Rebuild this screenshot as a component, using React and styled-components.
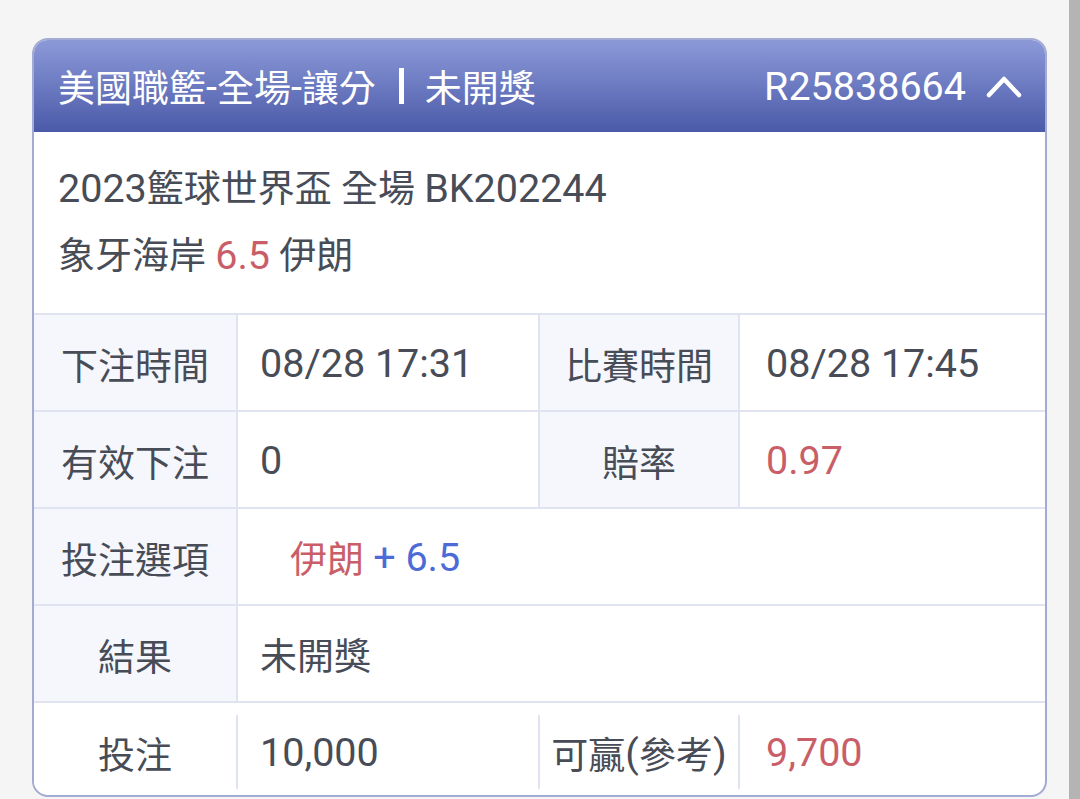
import styled, { createGlobalStyle } from 'styled-components'

const GlobalStyle = createGlobalStyle`
    html, body {
        margin: 0;
        padding: 0;
        background: #f5f5f5;
        overflow: hidden;
    }
    body {
        font-family: Roboto, "Noto Sans CJK TC", "Noto Sans", sans-serif;
        color: #474c57;
    }
`

const Page = styled.div`
    display: flex;
    height: 799px;
`

const Main = styled.div`
    flex: 1;
    padding: 38px 22px 0 32px;
    box-sizing: border-box;
`

const ScrollBar = styled.div`
    width: 11px;
    background: #b4b4b4;
`

const Card = styled.div`
    border: 2px solid #a3aad3;
    border-radius: 16px;
    overflow: hidden;
    background: #fff;
`

const Header = styled.div`
    height: 92px;
    display: flex;
    align-items: center;
    justify-content: space-between;
    padding: 0 23px 0 24px;
    background: linear-gradient(to bottom, #8c99d9, #4b5aa8);
    color: #fff;
    font-size: 37px;
`

const HeaderTitle = styled.div`
    display: flex;
    align-items: center;
`

const Bar = styled.span`
    display: inline-block;
    width: 5px;
    height: 36px;
    background: #fff;
    margin: 0 21px 0 23px;
`

const HeaderRight = styled.div`
    display: flex;
    align-items: center;
    gap: 20px;
`

// latin runs render a touch larger than the CJK glyphs
const Num = styled.span`
    font-size: 39.5px;
`

const Info = styled.div`
    height: 181px;
    box-sizing: border-box;
    padding: 24px 24px 0;
    font-size: 37px;
    line-height: 66px;
`

const Red = styled.span`
    color: #c95e68;
`

const Blue = styled.span`
    color: #4d6bd6;
`

const Row = styled.div`
    display: grid;
    grid-template-columns: 202px 302px 200px 1fr;
    height: ${p => (p.$last ? '94px' : '97px')};
    border-top: 2px solid #e0e4f0;
    box-sizing: border-box;
    padding: ${p => (p.$last ? '12px 0 6px' : '0')};
    font-size: 37px;
`

const Label = styled.div`
    display: flex;
    align-items: center;
    justify-content: center;
    padding-top: 2px;
    background: ${p => (p.$plain ? '#fff' : '#f5f7fc')};
    border-left: ${p => (p.$first ? 'none' : '2px solid #e0e4f0')};
`

const Value = styled.div`
    display: flex;
    align-items: center;
    padding-top: 1px;
    padding-left: ${p => p.$pad || 22}px;
    border-left: 2px solid #e0e4f0;
    grid-column: ${p => (p.$wide ? '2 / -1' : 'auto')};
    color: ${p => p.$color || 'inherit'};
`

function Chevron() {
    return (
        <svg width="36" height="24" viewBox="0 0 36 24">
            <polyline points="3,21 18,5 33,21" fill="none" stroke="#fff" strokeWidth="4.5" strokeLinecap="round" strokeLinejoin="round" />
        </svg>
    )
}

function App() {
    return (
        <Page>
            <GlobalStyle />
            <Main>
                <Card>
                    <Header>
                        <HeaderTitle>
                            美國職籃<Num>-</Num>全場<Num>-</Num>讓分<Bar />未開獎
                        </HeaderTitle>
                        <HeaderRight>
                            <Num>R25838664</Num>
                            <Chevron />
                        </HeaderRight>
                    </Header>
                    <Info>
                        <div><Num>2023</Num>籃球世界盃 全場 <Num>BK202244</Num></div>
                        <div>象牙海岸 <Red><Num>6.5</Num></Red> 伊朗</div>
                    </Info>
                    <Row>
                        <Label $first>下注時間</Label>
                        <Value><Num>08/28 17:31</Num></Value>
                        <Label>比賽時間</Label>
                        <Value $pad={26}><Num>08/28 17:45</Num></Value>
                    </Row>
                    <Row>
                        <Label $first>有效下注</Label>
                        <Value><Num>0</Num></Value>
                        <Label>賠率</Label>
                        <Value $pad={26} $color="#c95e68"><Num>0.97</Num></Value>
                    </Row>
                    <Row>
                        <Label $first>投注選項</Label>
                        <Value $wide $pad={52}>
                            <Red>伊朗</Red>&nbsp;<Blue><Num>+ 6.5</Num></Blue>
                        </Value>
                    </Row>
                    <Row>
                        <Label $first>結果</Label>
                        <Value $wide>未開獎</Value>
                    </Row>
                    <Row $last>
                        <Label $first $plain>投注</Label>
                        <Value><Num>10,000</Num></Value>
                        <Label $plain>可贏<Num>(</Num>參考<Num>)</Num></Label>
                        <Value $pad={26} $color="#c95e68"><Num>9,700</Num></Value>
                    </Row>
                </Card>
            </Main>
            <ScrollBar />
        </Page>
    )
}

export default App
